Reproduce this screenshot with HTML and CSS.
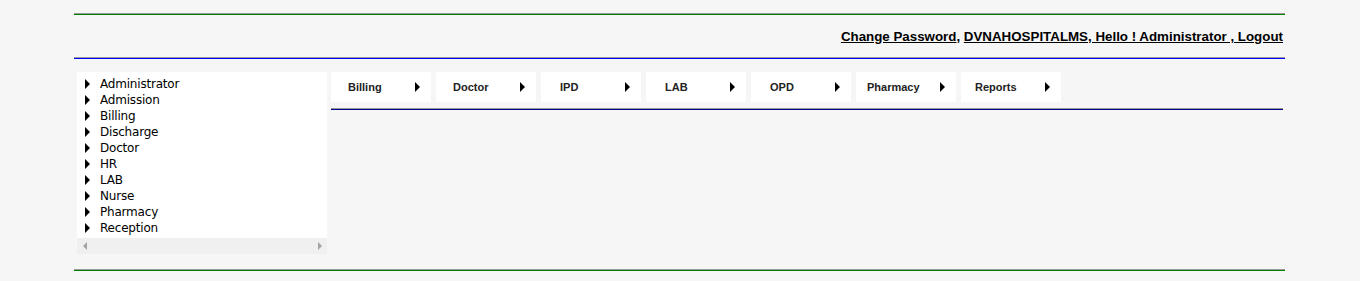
FILE: index.html
```html
<!DOCTYPE html>
<html>
<head>
<meta charset="utf-8">
<link rel="stylesheet" href="styles.css">
</head>
<body>
<div class="page">
  <div class="rule rule-green"></div>
  <div class="header">
    <a href="#" class="hlink">Change Password</a>, <a href="#" class="hlink">DVNAHOSPITALMS, Hello ! Administrator , Logout</a>
  </div>
  <div class="rule rule-blue"></div>
  <div class="main">
    <div class="side">
      <ul class="tree">
        <li><span class="tri"></span>Administrator</li>
        <li><span class="tri"></span>Admission</li>
        <li><span class="tri"></span>Billing</li>
        <li><span class="tri"></span>Discharge</li>
        <li><span class="tri"></span>Doctor</li>
        <li><span class="tri"></span>HR</li>
        <li><span class="tri"></span>LAB</li>
        <li><span class="tri"></span>Nurse</li>
        <li><span class="tri"></span>Pharmacy</li>
        <li><span class="tri"></span>Reception</li>
      </ul>
      <div class="hscroll">
        <span class="arr arr-l"></span>
        <span class="arr arr-r"></span>
      </div>
    </div>
    <div class="content">
      <div class="tabs">
        <div class="tab"><span class="lbl">Billing</span><span class="tri"></span></div>
        <div class="tab"><span class="lbl">Doctor</span><span class="tri"></span></div>
        <div class="tab"><span class="lbl lbl-short">IPD</span><span class="tri"></span></div>
        <div class="tab"><span class="lbl lbl-short">LAB</span><span class="tri"></span></div>
        <div class="tab"><span class="lbl lbl-short">OPD</span><span class="tri"></span></div>
        <div class="tab"><span class="lbl lbl-long">Pharmacy</span><span class="tri"></span></div>
        <div class="tab"><span class="lbl lbl-mid">Reports</span><span class="tri"></span></div>
      </div>
      <div class="rule rule-navy"></div>
    </div>
  </div>
  <div class="rule rule-green bottom"></div>
</div>
</body>
</html>
```

FILE: styles.css
```css
html, body {
  margin: 0;
  padding: 0;
  background: #f6f6f6;
}
.page {
  margin-left: 74px;
  width: 1211px;
  padding-top: 13px;
}
.rule {
  height: 0;
  border-top: 1px solid #9a9a9a;
  border-bottom: 1px solid #008000;
}
.rule-blue { border-bottom-color: #0000ff; }
.rule-navy { border-bottom-color: #00008b; }
.header {
  height: 42px;
  display: flex;
  align-items: center;
  justify-content: flex-end;
  padding-right: 2px;
  font-family: "Liberation Sans", Arial, sans-serif;
  font-weight: bold;
  font-size: 13.33px;
  color: #000;
  white-space: pre;
}
.hlink {
  color: #000;
  text-decoration: underline;
}
.main {
  display: flex;
  padding: 13px 2px 0 3px;
  gap: 4px;
  align-items: flex-start;
}
.side {
  width: 250px;
  background: #fff;
  flex: none;
}
.tree {
  list-style: none;
  margin: 0;
  padding: 4px 0 2px 8px;
  font-family: "DejaVu Sans", Tahoma, sans-serif;
  font-size: 12px;
  letter-spacing: -0.2px;
  color: #000;
}
.tree li {
  height: 16px;
  line-height: 16px;
  display: flex;
  align-items: center;
}
.tree .tri {
  margin-right: 10px;
}
.tri {
  display: inline-block;
  width: 0;
  height: 0;
  border-top: 5px solid transparent;
  border-bottom: 5px solid transparent;
  border-left: 5px solid #000;
  flex: none;
}
.hscroll {
  height: 16px;
  background: #f0f0f0;
  display: flex;
  align-items: center;
  justify-content: space-between;
  padding: 0 5px 0 6px;
}
.arr {
  width: 0;
  height: 0;
  border-top: 4px solid transparent;
  border-bottom: 4px solid transparent;
}
.arr-l { border-right: 4px solid #a3a3a3; }
.arr-r { border-left: 4px solid #a3a3a3; }
.content {
  flex: 1;
}
.tabs {
  display: flex;
  gap: 5px;
  margin-bottom: 6px;
}
.tab {
  width: 100px;
  height: 30px;
  box-sizing: border-box;
  background: #fff;
  display: flex;
  align-items: center;
  justify-content: space-between;
  padding: 0 11px 0 0;
  font-family: "Liberation Sans", Arial, sans-serif;
  font-weight: bold;
  font-size: 11px;
  color: #222;
}
.lbl { margin-left: 17px; }
.lbl-short { margin-left: 19px; }
.lbl-long { margin-left: 11px; }
.lbl-mid { margin-left: 14px; }
.bottom {
  margin-top: 15px;
}
```
